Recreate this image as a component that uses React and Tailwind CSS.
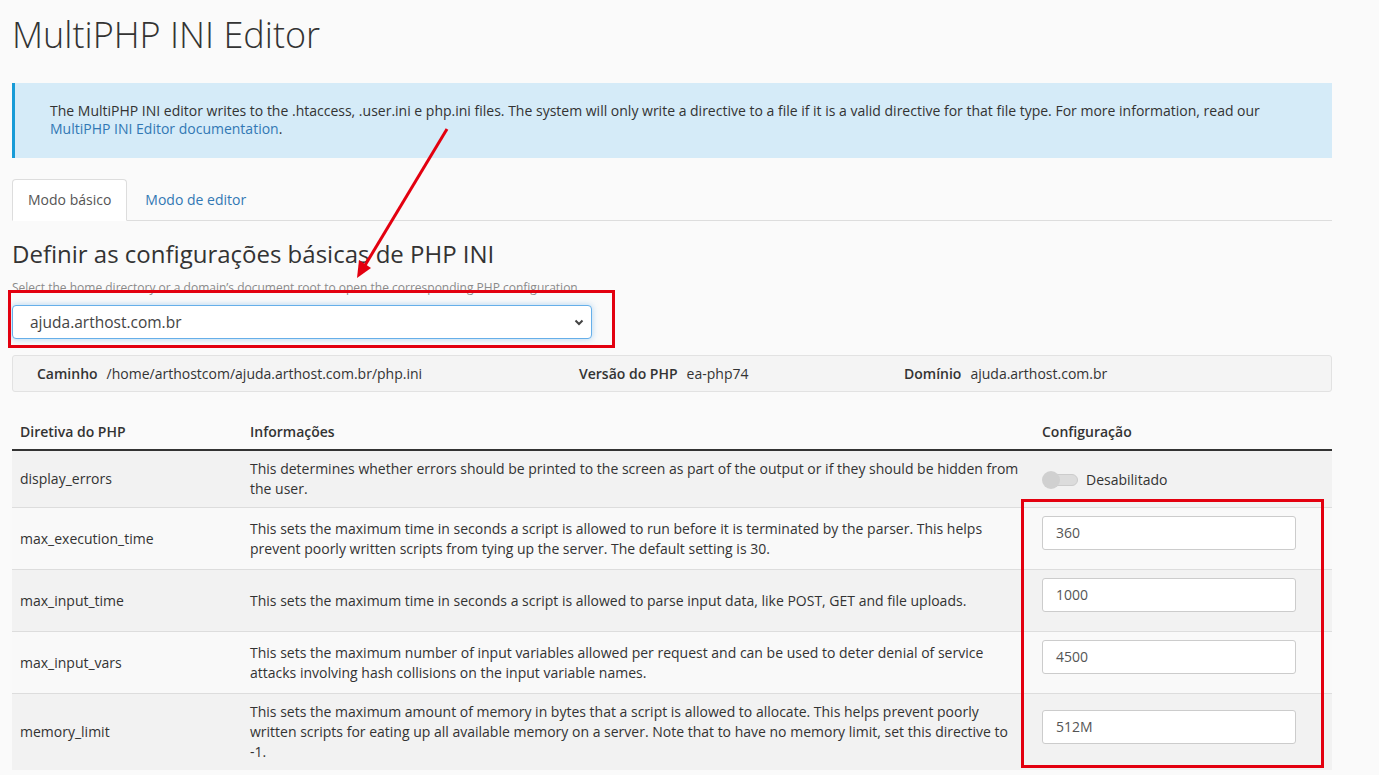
import React from "react";

const rows = [
  {
    name: "display_errors",
    info: "This determines whether errors should be printed to the screen as part of the output or if they should be hidden from the user.",
    toggle: true,
  },
  {
    name: "max_execution_time",
    info: "This sets the maximum time in seconds a script is allowed to run before it is terminated by the parser. This helps prevent poorly written scripts from tying up the server. The default setting is 30.",
    value: "360",
  },
  {
    name: "max_input_time",
    info: "This sets the maximum time in seconds a script is allowed to parse input data, like POST, GET and file uploads.",
    value: "1000",
  },
  {
    name: "max_input_vars",
    info: "This sets the maximum number of input variables allowed per request and can be used to deter denial of service attacks involving hash collisions on the input variable names.",
    value: "4500",
  },
  {
    name: "memory_limit",
    info: "This sets the maximum amount of memory in bytes that a script is allowed to allocate. This helps prevent poorly written scripts for eating up all available memory on a server. Note that to have no memory limit, set this directive to -1.",
    value: "512M",
  },
];

export default function App() {
  return (
    <div className="relative min-h-[775px] bg-[#fafafa] text-[#333] font-['Open_Sans',sans-serif] text-[14px] leading-[20px] overflow-hidden">
      <div className="w-[1320px] ml-[12px]">
        <h1 className="text-[36px] font-light leading-[40px] pt-[15px] text-[#333]">MultiPHP INI Editor</h1>

        <div className="mt-[28px] bg-[#d5ebf8] border-l-[3px] border-[#179bd7] pl-[35px] pr-[40px] pt-[19px] h-[75px] leading-[18px] text-[#333]">
          The MultiPHP INI editor writes to the .htaccess, .user.ini e php.ini files. The system will only write a directive to a file if it is a valid directive for that file type. For more information, read our{" "}
          <a className="text-[#3278b4]">MultiPHP INI Editor documentation</a>.
        </div>

        <div className="mt-[21px] flex border-b border-[#ddd] h-[42px]">
          <div className="bg-white border border-[#ddd] border-b-white rounded-t-[4px] px-[15px] pt-[10px] h-[42px] text-[#555]">Modo básico</div>
          <div className="px-[18px] pt-[11px] text-[#3278b4]">Modo de editor</div>
        </div>

        <h2 className="mt-[18px] text-[24px] leading-[30px] text-[#333]">Definir as configurações básicas de PHP INI</h2>
        <p className="mt-[11px] text-[12px] leading-[16px] text-[#8a8a8a]">Select the home directory or a domain’s document root to open the corresponding PHP configuration.</p>

        <div className="mt-[9px] w-[580px] h-[34px] bg-white border border-[#66afe9] rounded-[4px] shadow-[0_0_6px_rgba(102,175,233,0.5)] flex items-center justify-between pl-[17px] pr-[6px] text-[15.5px] text-[#444]">
          <span>ajuda.arthost.com.br</span>
          <svg width="12" height="12" viewBox="0 0 12 12" className="text-[#444]">
            <path d="M2.5 4.5 L6 8 L9.5 4.5" fill="none" stroke="currentColor" strokeWidth="2" />
          </svg>
        </div>

        <div className="mt-[16px] h-[37px] bg-[#f4f4f4] border border-[#e2e2e2] rounded-[3px] flex items-center">
          <div className="w-[566px] pl-[24px]">
            <span className="font-semibold">Caminho</span>
            <span className="ml-[9px]">/home/arthostcom/ajuda.arthost.com.br/php.ini</span>
          </div>
          <div className="w-[325px]">
            <span className="font-semibold">Versão do PHP</span>
            <span className="ml-[9px]">ea-php74</span>
          </div>
          <div>
            <span className="font-semibold">Domínio</span>
            <span className="ml-[9px]">ajuda.arthost.com.br</span>
          </div>
        </div>

        <table className="mt-[19px] w-full border-collapse">
          <thead>
            <tr className="border-b-2 border-[#333]">
              <th className="w-[230px] text-left font-semibold px-[8px] pt-[11px] pb-[7px]">Diretiva do PHP</th>
              <th className="w-[792px] text-left font-semibold px-[8px] pt-[11px] pb-[7px]">Informações</th>
              <th className="text-left font-semibold px-[8px] pt-[11px] pb-[7px]">Configuração</th>
            </tr>
          </thead>
          <tbody>
            {rows.map((r, i) => (
              <tr key={r.name} className={(i % 2 === 0 ? "bg-[#f2f2f2]" : "bg-[#f9f9f9]") + " border-t border-[#ddd]"}>
                <td className="px-[8px] py-[8px] align-middle">{r.name}</td>
                <td className="px-[8px] py-[8px] align-middle">{r.info}</td>
                <td className="px-[8px] py-[8px] align-middle">
                  {r.toggle ? (
                    <div className="flex items-center h-[39px] pt-[1px]">
                      <div className="relative w-[36px] h-[18px]">
                        <div className="absolute left-[4px] top-[3px] w-[32px] h-[12px] rounded-full bg-[#dcdcdc] border border-[#ccc]"></div>
                        <div className="absolute left-0 top-0 w-[18px] h-[18px] rounded-full bg-[#d0d0d0]"></div>
                      </div>
                      <span className="ml-[8px]">Desabilitado</span>
                    </div>
                  ) : (
                    <div className="w-[254px] h-[34px] mb-[11px] bg-white border border-[#ccc] rounded-[3px] flex items-center pl-[13px] text-[#555]">
                      {r.value}
                    </div>
                  )}
                </td>
              </tr>
            ))}
          </tbody>
        </table>
      </div>

      {/* annotations */}
      <div className="absolute left-[8px] top-[290px] w-[607px] h-[58px] border-[3px] border-[#e3000f] pointer-events-none"></div>
      <div className="absolute left-[1021px] top-[499px] w-[303px] h-[269px] border-[3px] border-[#e3000f] pointer-events-none"></div>
      <svg className="absolute left-0 top-0 pointer-events-none" width="1379" height="775">
        <line x1="447" y1="129" x2="364" y2="267" stroke="#e3000f" strokeWidth="3" />
        <polygon points="357,278 359,260 371,268" fill="#e3000f" />
      </svg>
    </div>
  );
}
